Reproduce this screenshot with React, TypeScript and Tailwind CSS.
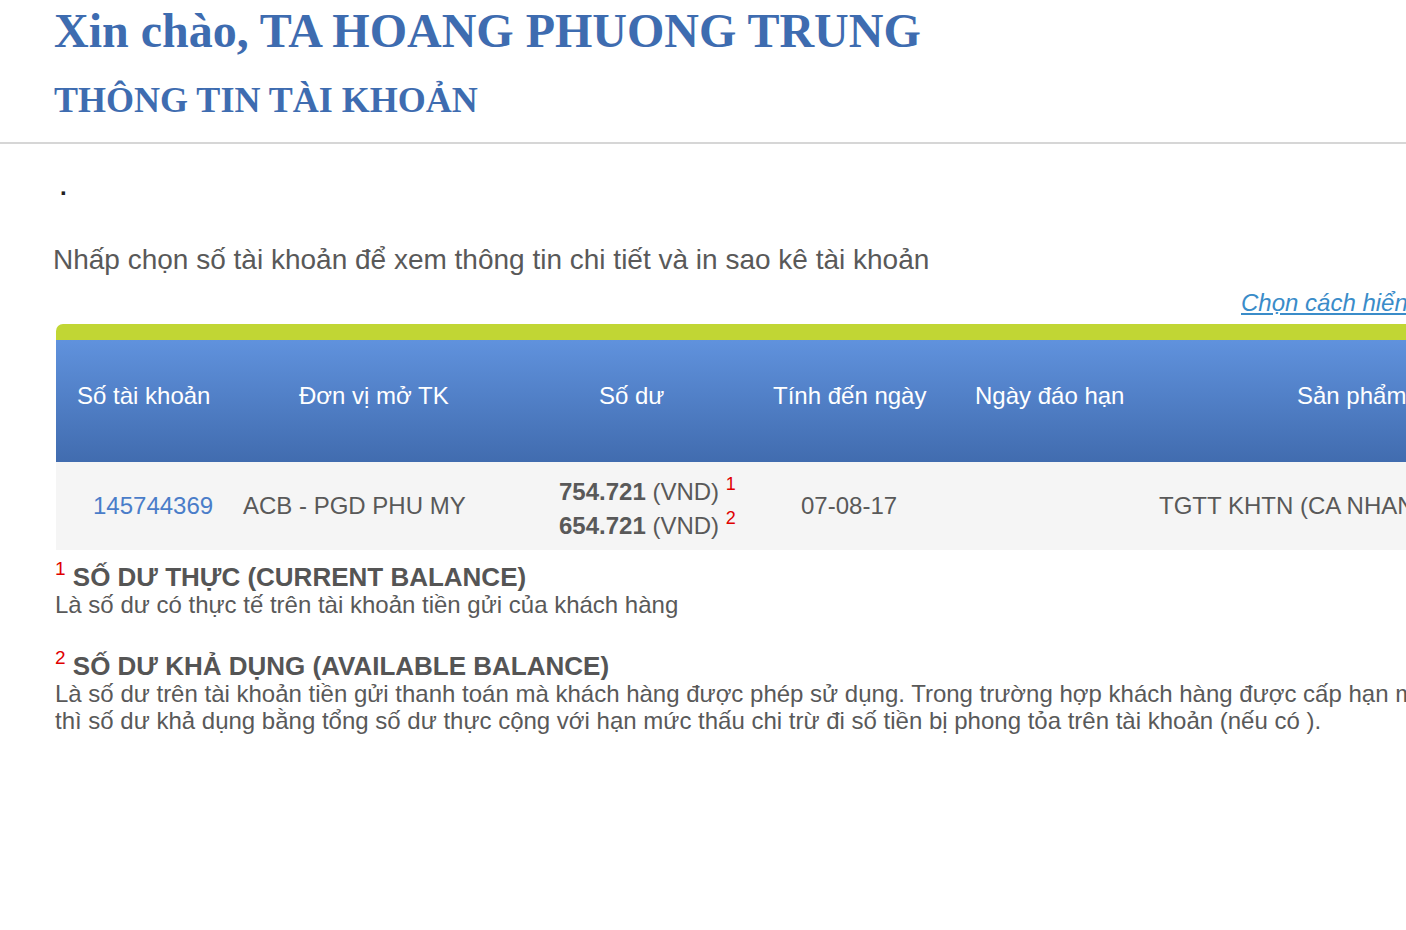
import React from 'react'

interface Column {
    title: string
    width: number
    headPad: string
    rowPad: string
}

const columns: Column[] = [
    { title: 'Số tài khoản', width: 176, headPad: 'pl-[21px]', rowPad: 'pl-[37px]' },
    { title: 'Đơn vị mở TK', width: 308, headPad: 'pl-[67px]', rowPad: 'pl-[11px]' },
    { title: 'Số dư', width: 220, headPad: 'pl-[59px]', rowPad: 'pl-[19px]' },
    { title: 'Tính đến ngày', width: 190, headPad: 'pl-[13px]', rowPad: 'pl-[41px]' },
    { title: 'Ngày đáo hạn', width: 190, headPad: 'pl-[25px]', rowPad: 'pl-[20px]' },
    { title: 'Sản phẩm', width: 560, headPad: 'pl-[157px]', rowPad: 'pl-[19px]' },
]

export default function App() {
    return (
        <div className="w-[1406px] min-h-[930px] overflow-hidden bg-white font-['Liberation_Sans',Arial,sans-serif] text-[#595959]">
            {/* Greeting */}
            <div className="pl-[54px] pt-[7px] pb-[24px] font-['Liberation_Serif','Times_New_Roman',serif] font-bold text-[#3e6cb0] whitespace-nowrap">
                <h1 className="text-[48px] leading-[48px]">Xin chào, TA HOANG PHUONG TRUNG</h1>
                <h2 className="mt-[27px] text-[36px] leading-[36px]">THÔNG TIN TÀI KHOẢN</h2>
            </div>
            <div className="h-[2px] bg-[#d6d6d6]" />

            <div className="pt-[31px] pl-[60px] text-[24px] leading-[24px] font-bold text-[#222]">.</div>

            <p className="mt-[47px] pl-[53px] text-[28px] leading-[28px] whitespace-nowrap">
                Nhấp chọn số tài khoản để xem thông tin chi tiết và in sao kê tài khoản
            </p>

            <div className="mt-[17px] pl-[1241px] text-[24px] leading-[24px] whitespace-nowrap">
                <a href="#" className="italic underline text-[#3a8cc9]">Chọn cách hiển thị</a>
            </div>

            {/* Accounts table */}
            <div className="mt-[9px] ml-[56px] w-[1644px]">
                <div className="h-[16px] rounded-tl-[7px] bg-[#c1d634]" />
                <div className="flex h-[122px] bg-gradient-to-b from-[#6092dd] to-[#416caf] text-white text-[24px] leading-[24px] whitespace-nowrap">
                    {columns.map((col) => (
                        <div key={col.title} style={{ width: col.width }} className={`shrink-0 pt-[44px] ${col.headPad}`}>
                            {col.title}
                        </div>
                    ))}
                </div>
                <div className="flex h-[88px] bg-[#f5f5f5] text-[24px] leading-[24px] whitespace-nowrap">
                    <div style={{ width: columns[0].width }} className={`shrink-0 pt-[32px] ${columns[0].rowPad}`}>
                        <a href="#" className="text-[#4a7dc9]">145744369</a>
                    </div>
                    <div style={{ width: columns[1].width }} className={`shrink-0 pt-[32px] ${columns[1].rowPad}`}>
                        ACB - PGD PHU MY
                    </div>
                    <div style={{ width: columns[2].width }} className={`shrink-0 pt-[13px] leading-[34px] ${columns[2].rowPad}`}>
                        <div>
                            <b>754.721</b> (VND) <sup className="text-[18px] top-[-10px] text-[#e00000]">1</sup>
                        </div>
                        <div>
                            <b>654.721</b> (VND) <sup className="text-[18px] top-[-10px] text-[#e00000]">2</sup>
                        </div>
                    </div>
                    <div style={{ width: columns[3].width }} className={`shrink-0 pt-[32px] ${columns[3].rowPad}`}>
                        07-08-17
                    </div>
                    <div style={{ width: columns[4].width }} className="shrink-0" />
                    <div style={{ width: columns[5].width }} className={`shrink-0 pt-[32px] ${columns[5].rowPad}`}>
                        TGTT KHTN (CA NHAN)
                    </div>
                </div>
            </div>

            {/* Footnotes */}
            <div className="mt-[14px] pl-[55px] leading-[27px] whitespace-nowrap">
                <div className="text-[26px] font-bold text-[#555]">
                    <sup className="text-[19px] font-normal top-[-11px] text-[#e00000]">1</sup> SỐ DƯ THỰC (CURRENT BALANCE)
                </div>
                <p className="text-[24px]">Là số dư có thực tế trên tài khoản tiền gửi của khách hàng</p>

                <div className="mt-[35px] text-[26px] font-bold text-[#555]">
                    <sup className="text-[19px] font-normal top-[-11px] text-[#e00000]">2</sup> SỐ DƯ KHẢ DỤNG (AVAILABLE BALANCE)
                </div>
                <p className="text-[24px]">
                    Là số dư trên tài khoản tiền gửi thanh toán mà khách hàng được phép sử dụng. Trong trường hợp khách hàng được cấp hạn mức thấu chi
                    <br />
                    thì số dư khả dụng bằng tổng số dư thực cộng với hạn mức thấu chi trừ đi số tiền bị phong tỏa trên tài khoản (nếu có ).
                </p>
            </div>
        </div>
    )
}
